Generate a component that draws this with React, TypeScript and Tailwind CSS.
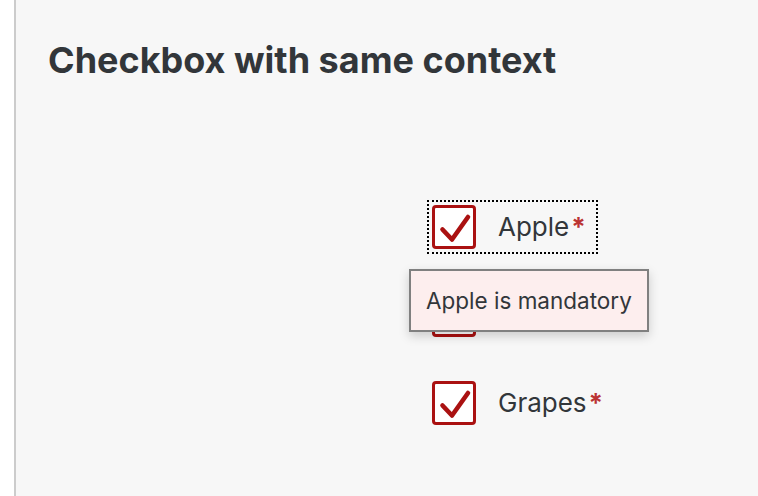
import React from 'react'

const rows = [
  { label: 'Apple', focused: true },
  { label: 'Banana', focused: false },
  { label: 'Grapes', focused: false },
]

function CheckBox() {
  return (
    <span className="flex h-[44px] w-[44px] shrink-0 items-center justify-center rounded-[4px] border-[3px] border-[#aa1111] bg-white">
      <svg width="44" height="44" viewBox="0 0 44 44" className="-m-[3px]">
        <path d="M10.5 24.5 L20 34.5 L36 12" fill="none" stroke="#aa1111" strokeWidth="4.6" strokeLinecap="round" strokeLinejoin="round" />
      </svg>
    </span>
  )
}

export default function App() {
  return (
    <div className="flex h-[496px] w-full bg-white font-['Inter',sans-serif] text-[#32363a]">
      <div className="w-[14px] shrink-0 bg-white" />
      <main className="relative flex-1 border-l-2 border-[#cccccc] bg-[#f7f7f7]">
        <h1 className="pl-[32px] pt-[38px] text-[36px] font-bold leading-[44px]">
          Checkbox with same context
        </h1>

        <div className="mt-[101px] flex flex-col pl-[411px]">
          {rows.map((row) => (
            <div key={row.label} className="flex h-[88px] items-center">
              <div
                className={
                  row.focused
                    ? 'flex items-center gap-[22px] px-[5px] py-[5px] outline-2 outline-dotted outline-black -outline-offset-2'
                    : 'flex items-center gap-[22px] px-[5px] py-[5px]'
                }
              >
                <CheckBox />
                <span className="pr-[7px] text-[26px] leading-[44px]">
                  {row.label}
                  <span className="ml-[2px] font-bold text-[#bb3333]">*</span>
                </span>
              </div>
            </div>
          ))}
        </div>

        <div className="absolute left-[393px] top-[269px] border-2 border-[#808080] bg-[#fdeeee] px-[15px] py-[15px] text-[22.5px] leading-[29px] shadow-[0_4px_10px_rgba(0,0,0,0.18)]">
          Apple is mandatory
        </div>
      </main>
    </div>
  )
}
